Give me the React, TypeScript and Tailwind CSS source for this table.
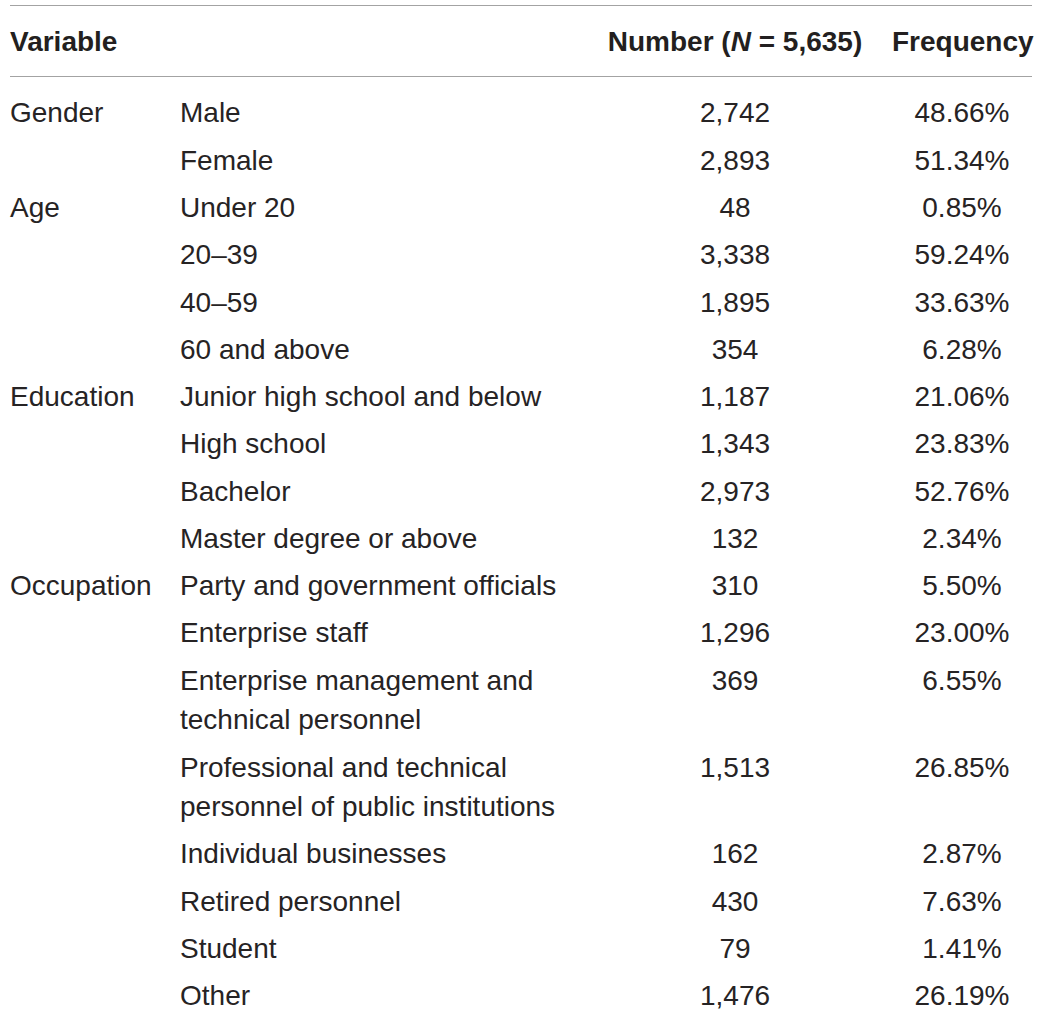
import React from 'react';

type Row = {
  group?: string;
  label: string;
  count: string;
  freq: string;
};

const rows: Row[] = [
  { group: 'Gender', label: 'Male', count: '2,742', freq: '48.66%' },
  { label: 'Female', count: '2,893', freq: '51.34%' },
  { group: 'Age', label: 'Under 20', count: '48', freq: '0.85%' },
  { label: '20–39', count: '3,338', freq: '59.24%' },
  { label: '40–59', count: '1,895', freq: '33.63%' },
  { label: '60 and above', count: '354', freq: '6.28%' },
  { group: 'Education', label: 'Junior high school and below', count: '1,187', freq: '21.06%' },
  { label: 'High school', count: '1,343', freq: '23.83%' },
  { label: 'Bachelor', count: '2,973', freq: '52.76%' },
  { label: 'Master degree or above', count: '132', freq: '2.34%' },
  { group: 'Occupation', label: 'Party and government officials', count: '310', freq: '5.50%' },
  { label: 'Enterprise staff', count: '1,296', freq: '23.00%' },
  { label: 'Enterprise management and technical personnel', count: '369', freq: '6.55%' },
  { label: 'Professional and technical personnel of public institutions', count: '1,513', freq: '26.85%' },
  { label: 'Individual businesses', count: '162', freq: '2.87%' },
  { label: 'Retired personnel', count: '430', freq: '7.63%' },
  { label: 'Student', count: '79', freq: '1.41%' },
  { label: 'Other', count: '1,476', freq: '26.19%' },
];

const cols = 'grid grid-cols-[170px_414px_282px_156px]';

export default function App() {
  return (
    <div className="min-h-[1015px] w-[1044px] bg-white pt-[5px] text-[28px] leading-[39.5px] text-[#262324] [font-family:'Liberation_Sans',Arial,sans-serif]">
      <div className="ml-[10px] w-[1022px]">
        {/* Header */}
        <div className={`${cols} border-y border-[#a3a3a3] pt-[16px] pb-[14px] font-bold text-[#231f20]`}>
          <div>Variable</div>
          <div />
          <div className="text-center">
            Number (<span className="italic">N</span> = 5,635)
          </div>
          <div className="pl-4 text-center">Frequency</div>
        </div>

        {/* Body */}
        <div className="pt-[13px]">
          {rows.map((row, i) => (
            <div key={i} className={`${cols} py-[3.9px]`}>
              <div>{row.group ?? ''}</div>
              <div>{row.label}</div>
              <div className="text-center">{row.count}</div>
              <div className="pl-4 text-center">{row.freq}</div>
            </div>
          ))}
        </div>
      </div>
    </div>
  );
}
